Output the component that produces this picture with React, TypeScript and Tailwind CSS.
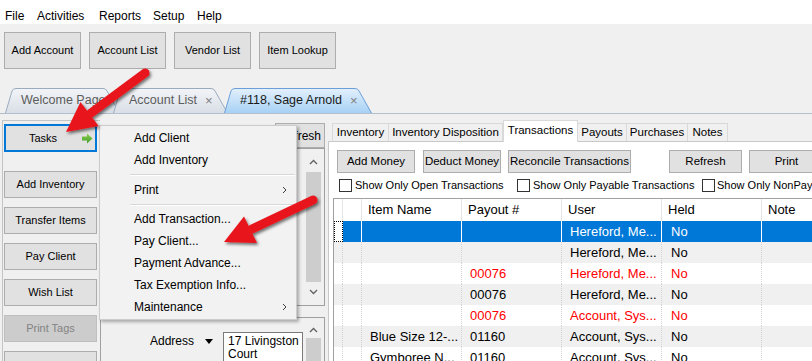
import React from "react";

function DocTab({
  w,
  wClass,
  label,
  close,
  selected,
  extra,
  id,
}: {
  w: number;
  wClass: string;
  label: string;
  close?: boolean;
  selected?: boolean;
  extra?: string;
  id: string;
}) {
  const H = 25;
  const d = `M0.5 ${H} L7 3 Q8 0.5 11 0.5 L${w - 17} 0.5 Q${w - 14} 0.5 ${w - 13} 3 L${w - 0.5} ${H}`;
  return (
    <div className={`relative h-[25px] shrink-0 ${wClass} ${extra ?? ""}`}>
      <svg className="absolute inset-0" width={w} height={H}>
        <defs>
          <linearGradient id={id} x1="0" y1="0" x2="0" y2="1">
            {selected ? (
              <>
                <stop offset="0" stopColor="#e3f0fc" />
                <stop offset="1" stopColor="#a7d1f5" />
              </>
            ) : (
              <>
                <stop offset="0" stopColor="#f2f4f7" />
                <stop offset="1" stopColor="#d9dfe7" />
              </>
            )}
          </linearGradient>
        </defs>
        <path d={d + " Z"} fill={`url(#${id})`} />
        <path d={d} fill="none" stroke={selected ? "#6c9fd8" : "#9aabc0"} strokeWidth="1" />
      </svg>
      <div
        className={`relative flex items-center h-full pl-[16px] text-[12.5px] ${
          selected ? "text-[#1a1a1a]" : "text-[#5c5c5c]"
        }`}
      >
        <span>{label}</span>
        {close && <span className="ml-[8px] text-[#808080] text-[13px]">×</span>}
      </div>
    </div>
  );
}

function ChevUp() {
  return (
    <svg width="9" height="6" viewBox="0 0 9 6">
      <path d="M1 5 L4.5 1.5 L8 5" stroke="#606060" strokeWidth="1.3" fill="none" />
    </svg>
  );
}
function ChevDown() {
  return (
    <svg width="9" height="6" viewBox="0 0 9 6">
      <path d="M1 1 L4.5 4.5 L8 1" stroke="#606060" strokeWidth="1.3" fill="none" />
    </svg>
  );
}
function SubArrow() {
  return (
    <svg width="5" height="8" viewBox="0 0 5 8" className="ml-auto mr-[9px]">
      <path d="M1 1 L4 4 L1 7" stroke="#404040" strokeWidth="1" fill="none" />
    </svg>
  );
}

function MenuItem({ label, sub }: { label: string; sub?: boolean }) {
  return (
    <div className="h-[22px] flex items-center pl-[34px] text-[12px]">
      <span>{label}</span>
      {sub && <SubArrow />}
    </div>
  );
}

type Row = {
  item?: string;
  payout?: string;
  user: string;
  held: string;
  red?: boolean;
  sel?: boolean;
};

const rows: Row[] = [
  { user: "Hereford, Me...", held: "No", sel: true },
  { user: "Hereford, Me...", held: "No" },
  { payout: "00076", user: "Hereford, Me...", held: "No", red: true },
  { payout: "00076", user: "Hereford, Me...", held: "No" },
  { payout: "00076", user: "Account, Sys...", held: "No", red: true },
  { item: "Blue Size 12-...", payout: "01160", user: "Account, Sys...", held: "No" },
  { item: "Gymboree N...", payout: "01160", user: "Account, Sys...", held: "No" },
];

export default function App() {
  return (
    <div className="relative w-[812px] h-[361px] overflow-hidden bg-[#f0f0f0] text-black text-[11px] [font-family:'Liberation_Sans',Arial,sans-serif]">
      {/* Menu bar */}
      <div className="h-[24px] bg-white flex items-start pt-[8px] pl-[5px] leading-[16px] text-[12px]">
        <span className="w-[32px]">File</span>
        <span className="w-[62px]">Activities</span>
        <span className="w-[54px]">Reports</span>
        <span className="w-[44px]">Setup</span>
        <span>Help</span>
      </div>

      {/* Toolbar */}
      <div className="flex gap-[8px] pl-[4px] pt-[8px]">
        {["Add Account", "Account List", "Vendor List", "Item Lookup"].map((t) => (
          <div
            key={t}
            className="w-[77px] h-[37px] border border-[#adadad] bg-[#e1e1e1] flex items-center justify-center"
          >
            {t}
          </div>
        ))}
      </div>

      {/* Document tabs */}
      <div className="flex pl-[5px] mt-[19px] h-[25px]">
        <DocTab id="g1" w={115} wClass="w-[115px]" label="Welcome Page" />
        <DocTab id="g2" w={115} wClass="w-[115px]" extra="-ml-[7px]" label="Account List" close />
        <DocTab id="g3" w={148} wClass="w-[148px]" extra="-ml-[4px]" label="#118, Sage Arnold" close selected />
      </div>
      <div className="h-px bg-[#b3bfcd]" />

      {/* Main area */}
      <div className="flex h-[247px] overflow-hidden">
        {/* Left column */}
        <div className="ml-[2px] mt-[6px] w-[98px] shrink-0 border-l border-t border-[#c4c4c4] pl-[1px] pt-[3px] flex flex-col">
          <div className="w-[93px] h-[28px] shrink-0 border-2 border-[#0078d7] bg-[#e1e1e1] flex items-center pl-[23px] pr-[2px]">
            <span>Tasks</span>
            <svg width="11" height="11" viewBox="0 0 11 11" className="ml-auto">
              <defs>
                <linearGradient id="ga" x1="0" y1="0" x2="0" y2="1">
                  <stop offset="0" stopColor="#8fd14f" />
                  <stop offset="1" stopColor="#3f9b2c" />
                </linearGradient>
              </defs>
              <path d="M0 3.5 H5 V0.5 L10.5 5.5 L5 10.5 V7.5 H0 Z" fill="url(#ga)" />
            </svg>
          </div>
          <div className="mt-[19px] flex flex-col gap-[9px]">
            {["Add Inventory", "Transfer Items", "Pay Client", "Wish List"].map((t) => (
              <div
                key={t}
                className="w-[93px] h-[27px] shrink-0 border border-[#adadad] bg-[#e1e1e1] flex items-center justify-center"
              >
                {t}
              </div>
            ))}
            <div className="w-[93px] h-[27px] shrink-0 border border-[#bfbfbf] bg-[#cccccc] text-[#838383] flex items-center justify-center">
              Print Tags
            </div>
            <div className="w-[93px] h-[27px] shrink-0 border border-[#adadad] bg-[#e1e1e1]" />
          </div>
        </div>

        {/* Middle column (under popup) */}
        <div className="w-[228px] shrink-0 flex flex-col">
          <div className="mt-[9px] h-[25px] shrink-0 flex justify-end pr-[3px]">
            <div className="w-[50px] border border-[#adadad] bg-[#e1e1e1] flex items-center justify-center text-[12px]">
              Refresh
            </div>
          </div>
          <div className="h-[158px] shrink-0 mr-[3px] border border-[#a0a0a0] flex justify-end pt-[3px] pb-[3px] pr-[3px]">
            <div className="w-[15px] flex flex-col">
              <div className="h-[20px] flex items-center justify-center">
                <ChevUp />
              </div>
              <div className="flex-1 bg-[#cdcdcd]" />
              <div className="h-[20px] flex items-center justify-center">
                <ChevDown />
              </div>
            </div>
          </div>
          <div className="mt-[11px] flex-1 mr-[3px] border border-[#a0a0a0] border-b-0 flex">
            <div className="flex-1 flex items-start pt-[14px] pl-[49px] text-[12px]">
              <span className="mt-[1px] leading-[16px]">Address</span>
              <svg width="8" height="5" viewBox="0 0 8 5" className="ml-[11px] mt-[7px]">
                <polygon points="0,0 8,0 4,5" fill="#000" />
              </svg>
              <div className="ml-[10px] w-[80px] h-[40px] border border-[#7a7a7a] bg-white px-[4px] pt-[2px] leading-[13px] whitespace-nowrap">
                17 Livingston
                <br />
                Court
              </div>
            </div>
            <div className="w-[15px] mr-[3px] mt-[3px] flex flex-col">
              <div className="h-[17px] flex items-center justify-center">
                <ChevUp />
              </div>
              <div className="flex-1 bg-[#cdcdcd]" />
            </div>
          </div>
        </div>

        {/* Right column */}
        <div className="flex-1 flex flex-col mt-[6px] min-w-0">
          <div className="flex items-end h-[21px] pl-[4px] shrink-0 text-[11.5px] whitespace-nowrap">
            <div className="w-[57px] h-[18px] border border-b-0 border-[#d9d9d9] bg-[#f0f0f0] flex items-center justify-center">
              Inventory
            </div>
            <div className="w-[114px] h-[18px] border-t border-r border-[#d9d9d9] bg-[#f0f0f0] flex items-center justify-center">
              Inventory Disposition
            </div>
            <div className="relative z-10 w-[75px] h-[22px] -mb-px border border-b-0 border-[#d9d9d9] bg-white flex items-center justify-center pb-[2px]">
              Transactions
            </div>
            <div className="w-[49px] h-[18px] border-t border-r border-[#d9d9d9] bg-[#f0f0f0] flex items-center justify-center">
              Payouts
            </div>
            <div className="w-[61px] h-[18px] border-t border-r border-[#d9d9d9] bg-[#f0f0f0] flex items-center justify-center">
              Purchases
            </div>
            <div className="w-[40px] h-[18px] border-t border-r border-[#d9d9d9] bg-[#f0f0f0] flex items-center justify-center">
              Notes
            </div>
          </div>
          <div className="flex-1 bg-white border-l border-t border-[#c8c8c8] pl-[4px] pt-[8px] flex flex-col min-w-0 text-[11.5px] whitespace-nowrap">
            <div className="flex pl-[4px] shrink-0">
              <div className="w-[78px] h-[23px] shrink-0 border border-[#adadad] bg-[#e1e1e1] flex items-center justify-center">
                Add Money
              </div>
              <div className="ml-[8px] w-[78px] h-[23px] shrink-0 border border-[#adadad] bg-[#e1e1e1] flex items-center justify-center">
                Deduct Money
              </div>
              <div className="ml-[7px] w-[123px] h-[23px] shrink-0 border border-[#adadad] bg-[#e1e1e1] flex items-center justify-center">
                Reconcile Transactions
              </div>
              <div className="ml-[38px] w-[73px] h-[23px] shrink-0 border border-[#adadad] bg-[#e1e1e1] flex items-center justify-center">
                Refresh
              </div>
              <div className="ml-[7px] w-[75px] h-[23px] shrink-0 border border-[#adadad] bg-[#e1e1e1] flex items-center justify-center">
                Print
              </div>
            </div>
            <div className="mt-[6px] h-[13px] flex items-center pl-[6px] shrink-0 text-[11px]">
              <div className="w-[178px] shrink-0 flex items-center">
                <div className="w-[13px] h-[13px] border border-[#333] bg-white" />
                <span className="ml-[3px] leading-[13px]">Show Only Open Transactions</span>
              </div>
              <div className="w-[185px] shrink-0 flex items-center">
                <div className="w-[13px] h-[13px] border border-[#333] bg-white" />
                <span className="ml-[3px] leading-[13px]">Show Only Payable Transactions</span>
              </div>
              <div className="shrink-0 flex items-center">
                <div className="w-[13px] h-[13px] border border-[#333] bg-white" />
                <span className="ml-[2px] leading-[13px]">Show Only NonPayable Transactions</span>
              </div>
            </div>

            {/* Grid */}
            <div className="mt-[6px] border-t border-l border-[#a0a0a0] text-[13px]">
              <div className="flex h-[22px]">
                <div className="w-[9px] shrink-0 border-r border-[#e5e5e5]" />
                <div className="w-[19px] shrink-0 border-r border-[#e5e5e5]" />
                {["Item Name", "Payout #", "User", "Held", "Note"].map((h) => (
                  <div
                    key={h}
                    className="w-[100px] shrink-0 border-r border-[#e5e5e5] pl-[6px] flex items-center"
                  >
                    {h}
                  </div>
                ))}
              </div>
              {rows.map((r, i) => {
                const gray = i % 2 === 1;
                if (r.sel) {
                  return (
                    <div key={i} className="flex h-[21px]">
                      <div className="w-[9px] shrink-0 bg-white border border-dotted border-black" />
                      <div className="flex bg-[#0078d7] text-white">
                        <div className="w-[19px] shrink-0 border-r border-white" />
                        <div className="w-[100px] shrink-0 border-r border-white" />
                        <div className="w-[100px] shrink-0 border-r border-white" />
                        <div className="w-[100px] shrink-0 border-r border-white pl-[8px] flex items-center">
                          {r.user}
                        </div>
                        <div className="w-[100px] shrink-0 border-r border-white pl-[9px] flex items-center">
                          {r.held}
                        </div>
                        <div className="w-[100px] shrink-0" />
                      </div>
                    </div>
                  );
                }
                return (
                  <div
                    key={i}
                    className={`flex h-[21px] ${gray ? "bg-[#f0f0f0]" : "bg-white"} ${
                      r.red ? "text-[#ff0000]" : "text-black"
                    }`}
                  >
                    <div className="w-[9px] shrink-0 border-r border-dotted border-[#d4d4d4]" />
                    <div className="w-[19px] shrink-0 border-r border-dotted border-[#d4d4d4]" />
                    <div className="w-[100px] shrink-0 border-r border-dotted border-[#d4d4d4] pl-[8px] flex items-center">
                      {r.item ?? ""}
                    </div>
                    <div className="w-[100px] shrink-0 border-r border-dotted border-[#d4d4d4] pl-[8px] flex items-center">
                      {r.payout ?? ""}
                    </div>
                    <div className="w-[100px] shrink-0 border-r border-dotted border-[#d4d4d4] pl-[8px] flex items-center">
                      {r.user}
                    </div>
                    <div className="w-[100px] shrink-0 border-r border-dotted border-[#d4d4d4] pl-[9px] flex items-center">
                      {r.held}
                    </div>
                    <div className="w-[100px] shrink-0" />
                  </div>
                );
              })}
            </div>
          </div>
        </div>
      </div>

      {/* Popup menu */}
      <div className="absolute left-[99px] top-[125px] w-[198px] h-[195px] bg-[#f2f2f2] border border-[#cccccc] shadow-[2px_2px_3px_rgba(0,0,0,0.3)] pt-[1px] z-20">
        <MenuItem label="Add Client" />
        <MenuItem label="Add Inventory" />
        <div className="h-[8px] flex items-center">
          <div className="ml-[30px] mr-[1px] flex-1 h-[2px] border-t border-[#d7d7d7] border-b border-b-white" />
        </div>
        <MenuItem label="Print" sub />
        <div className="h-[7px] flex items-center">
          <div className="ml-[30px] mr-[1px] flex-1 h-[2px] border-t border-[#d7d7d7] border-b border-b-white" />
        </div>
        <MenuItem label="Add Transaction..." />
        <MenuItem label="Pay Client..." />
        <MenuItem label="Payment Advance..." />
        <MenuItem label="Tax Exemption Info..." />
        <MenuItem label="Maintenance" sub />
      </div>

      {/* Red annotation arrows */}
      <svg
        className="absolute inset-0 pointer-events-none z-30"
        width="812"
        height="361"
        viewBox="0 0 812 361"
      >
        <defs>
          <filter id="sh" x="-20%" y="-20%" width="140%" height="140%">
            <feDropShadow dx="1.5" dy="2" stdDeviation="1.5" floodColor="#000" floodOpacity="0.55" />
          </filter>
        </defs>
        <g filter="url(#sh)">
          <line x1="145" y1="73" x2="91" y2="113" stroke="#e8141a" strokeWidth="9" strokeLinecap="round" />
          <polygon points="66,132 98.5,126 80.5,102" fill="#e8141a" />
        </g>
        <g filter="url(#sh)">
          <line x1="313" y1="200" x2="252" y2="229" stroke="#e8141a" strokeWidth="9" strokeLinecap="round" />
          <polygon points="224,242 257,243 244,216.5" fill="#e8141a" />
        </g>
      </svg>
    </div>
  );
}
